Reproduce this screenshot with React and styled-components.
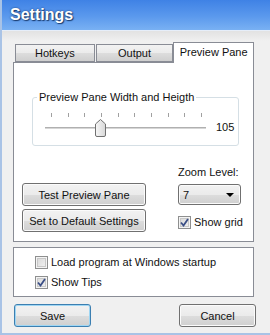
import styled, { createGlobalStyle } from 'styled-components';

const GlobalStyle = createGlobalStyle`
  html, body {
    margin: 0;
    padding: 0;
    overflow: hidden;
  }
  body {
    font-family: "Liberation Sans", Arial, sans-serif;
    font-size: 11px;
    color: #111;
    white-space: nowrap;
  }
`;

const Window = styled.div`
  width: 270px;
  height: 335px;
  box-sizing: border-box;
  display: flex;
  flex-direction: column;
  border-left: 2px solid #a9c3e6;
  border-bottom: 2px solid #a9c3e6;
  background: #f0f0f0;
`;

const TitleBar = styled.div`
  flex: none;
  height: 30px;
  display: flex;
  align-items: center;
  padding-left: 8px;
  background: linear-gradient(to bottom, #3f82e5 0%, #5b99ed 55%, #79b1f3 100%);
  border-bottom: 1px solid #e6eef9;
  color: #fff;
  font-weight: bold;
  font-size: 16px;
  text-shadow: 0 0 2px #1b3d70, 1px 1px 1px #1b3d70;
`;

const Body = styled.div`
  flex: 1;
  display: flex;
  flex-direction: column;
  padding: 11px 16px 0 11px;
  background: linear-gradient(to bottom, #e2e2e2 0px, #f0f0f0 10px);
`;

const TabStrip = styled.div`
  display: flex;
  align-items: flex-end;
  height: 20px;
`;

const Tab = styled.div`
  box-sizing: border-box;
  width: ${(p) => p.$width}px;
  margin-left: ${(p) => p.$offset || 0}px;
  height: ${(p) => (p.$active ? 21 : 18)}px;
  margin-bottom: ${(p) => (p.$active ? -1 : 0)}px;
  position: relative;
  z-index: ${(p) => (p.$active ? 1 : 0)};
  display: flex;
  align-items: center;
  justify-content: center;
  border: 1px solid #898c95;
  border-bottom: ${(p) => (p.$active ? 'none' : '1px solid #898c95')};
  background: ${(p) =>
    p.$active ? '#fff' : 'linear-gradient(to bottom, #f2f2f2 0%, #ebebeb 50%, #dddddd 51%, #cfcfcf 100%)'};
  padding-bottom: ${(p) => (p.$active ? 2 : 0)}px;
`;

const Panel = styled.div`
  box-sizing: border-box;
  height: 180px;
  border: 1px solid #898c95;
  background: #fff;
  padding: 28px 12px 0 8px;
`;

const GroupBox = styled.fieldset`
  box-sizing: border-box;
  width: 207px;
  height: 55px;
  margin: 0 0 0 10px;
  padding: 0;
  border: 1px solid #d5dfe5;
  border-radius: 3px;
`;

const Legend = styled.legend`
  margin-left: 4px;
  padding: 0 2px;
  line-height: 13px;
`;

const SliderRow = styled.div`
  display: flex;
  align-items: flex-end;
  padding: 9px 0 0 12px;
`;

const Slider = styled.div`
  width: 161px;
  display: flex;
  flex-direction: column;
`;

const Ticks = styled.div`
  display: flex;
  justify-content: space-between;
  height: 4px;
  padding: 0 4px 0 6px;
`;

const Tick = styled.span`
  width: 1px;
  height: 4px;
  background: #a0a0a0;
`;

const TrackArea = styled.div`
  position: relative;
  height: 18px;
  margin-top: 2px;

  &::before {
    content: '';
    position: absolute;
    left: 0;
    right: 0;
    top: 8px;
    height: 2px;
    background: #d6d6d6;
    border-top: 1px solid #b0b0b0;
    box-sizing: border-box;
  }
`;

const Thumb = styled.svg`
  position: absolute;
  top: 0;
`;

const SliderValue = styled.span`
  margin-left: 10px;
  line-height: 13px;
  padding-bottom: 3px;
`;

const LowerRow = styled.div`
  display: flex;
  justify-content: space-between;
  align-items: flex-start;
  margin-top: 20px;
`;

const ButtonColumn = styled.div`
  display: flex;
  flex-direction: column;
  gap: 3px;
  padding-top: 17px;
`;

const Button = styled.button`
  box-sizing: border-box;
  width: ${(p) => p.$width}px;
  height: 23px;
  padding: 0;
  font-family: inherit;
  font-size: 11px;
  font-weight: normal;
  color: #111;
  border-radius: 3px;
  border: 1px solid ${(p) => (p.$default ? '#3c7fb1' : '#707070')};
  box-shadow: inset 0 0 0 1px ${(p) => (p.$default ? '#9fd6f3' : '#fbfbfb')};
  background: linear-gradient(to bottom, #f2f2f2 0%, #ebebeb 50%, #dddddd 51%, #cfcfcf 100%);
`;

const ZoomColumn = styled.div`
  width: 63px;
  display: flex;
  flex-direction: column;
`;

const FieldLabel = styled.span`
  line-height: 13px;
`;

const Select = styled.div`
  box-sizing: border-box;
  height: 21px;
  margin-top: 5px;
  display: flex;
  align-items: center;
  justify-content: space-between;
  padding: 0 6px 0 4px;
  border: 1px solid #707070;
  border-radius: 3px;
  box-shadow: inset 0 0 0 1px #fbfbfb;
  background: linear-gradient(to bottom, #f2f2f2 0%, #ebebeb 50%, #dddddd 51%, #cfcfcf 100%);
`;

const Arrow = styled.span`
  width: 0;
  height: 0;
  border-left: 4px solid transparent;
  border-right: 4px solid transparent;
  border-top: 4px solid #000;
`;

const CheckRow = styled.label`
  display: flex;
  align-items: center;
  gap: 3px;
  line-height: 13px;
  white-space: nowrap;
  margin-top: ${(p) => p.$top || 0}px;
`;

const Box = styled.span`
  box-sizing: border-box;
  width: 13px;
  height: 13px;
  flex: none;
  border: 1px solid #8e8f8f;
  box-shadow: inset 0 0 0 1px #f4f4f4, inset 0 0 0 2px #c8c8c8;
  background: linear-gradient(135deg, #d6d6d6 0%, #f4f4f4 100%);
  display: flex;
  align-items: center;
  justify-content: center;
`;

const OptionsBox = styled.div`
  box-sizing: border-box;
  height: 50px;
  margin-top: 5px;
  border: 1px solid #898c95;
  background: #fff;
  padding: 8px 0 0 21px;
  display: flex;
  flex-direction: column;
  gap: 7px;
`;

const Footer = styled.div`
  display: flex;
  justify-content: space-between;
  margin: 7px -2px 0 1px;
`;

function Checkbox({ checked, label, top }) {
  return (
    <CheckRow $top={top}>
      <Box>
        {checked && (
          <svg width="9" height="9" viewBox="0 0 9 9">
            <path d="M1 4.5 L3.5 7.5 L8 1" fill="none" stroke="#3b4f86" strokeWidth="1.8" />
          </svg>
        )}
      </Box>
      {label}
    </CheckRow>
  );
}

const ticks = Array.from({ length: 10 });

export default function App() {
  return (
    <>
      <GlobalStyle />
      <Window>
        <TitleBar>Settings</TitleBar>
        <Body>
          <TabStrip>
            <Tab $width={80} $offset={2}>Hotkeys</Tab>
            <Tab $width={78} $offset={1}>Output</Tab>
            <Tab $width={81} $active>Preview Pane</Tab>
          </TabStrip>
          <Panel>
            <GroupBox>
              <Legend>Preview Pane Width and Heigth</Legend>
              <SliderRow>
                <Slider>
                  <Ticks>
                    {ticks.map((_, i) => (
                      <Tick key={i} />
                    ))}
                  </Ticks>
                  <TrackArea>
                    <Thumb width="11" height="18" viewBox="0 0 11 18" style={{ left: 50 }}>
                      <defs>
                        <linearGradient id="thumb" x1="0" y1="0" x2="1" y2="0">
                          <stop offset="0" stopColor="#f6f6f6" />
                          <stop offset="1" stopColor="#d8d8d8" />
                        </linearGradient>
                      </defs>
                      <path
                        d="M0.5 5 L5.5 0.5 L10.5 5 L10.5 16 Q10.5 17.5 9 17.5 L2 17.5 Q0.5 17.5 0.5 16 Z"
                        fill="url(#thumb)"
                        stroke="#707070"
                      />
                    </Thumb>
                  </TrackArea>
                </Slider>
                <SliderValue>105</SliderValue>
              </SliderRow>
            </GroupBox>
            <LowerRow>
              <ButtonColumn>
                <Button $width={124}>Test Preview Pane</Button>
                <Button $width={124}>Set to Default Settings</Button>
              </ButtonColumn>
              <ZoomColumn>
                <FieldLabel>Zoom Level:</FieldLabel>
                <Select>
                  <span>7</span>
                  <Arrow />
                </Select>
                <Checkbox checked label="Show grid" top={11} />
              </ZoomColumn>
            </LowerRow>
          </Panel>
          <OptionsBox>
            <Checkbox label="Load program at Windows startup" />
            <Checkbox checked label="Show Tips" />
          </OptionsBox>
          <Footer>
            <Button $width={77} $default>Save</Button>
            <Button $width={77}>Cancel</Button>
          </Footer>
        </Body>
      </Window>
    </>
  );
}
